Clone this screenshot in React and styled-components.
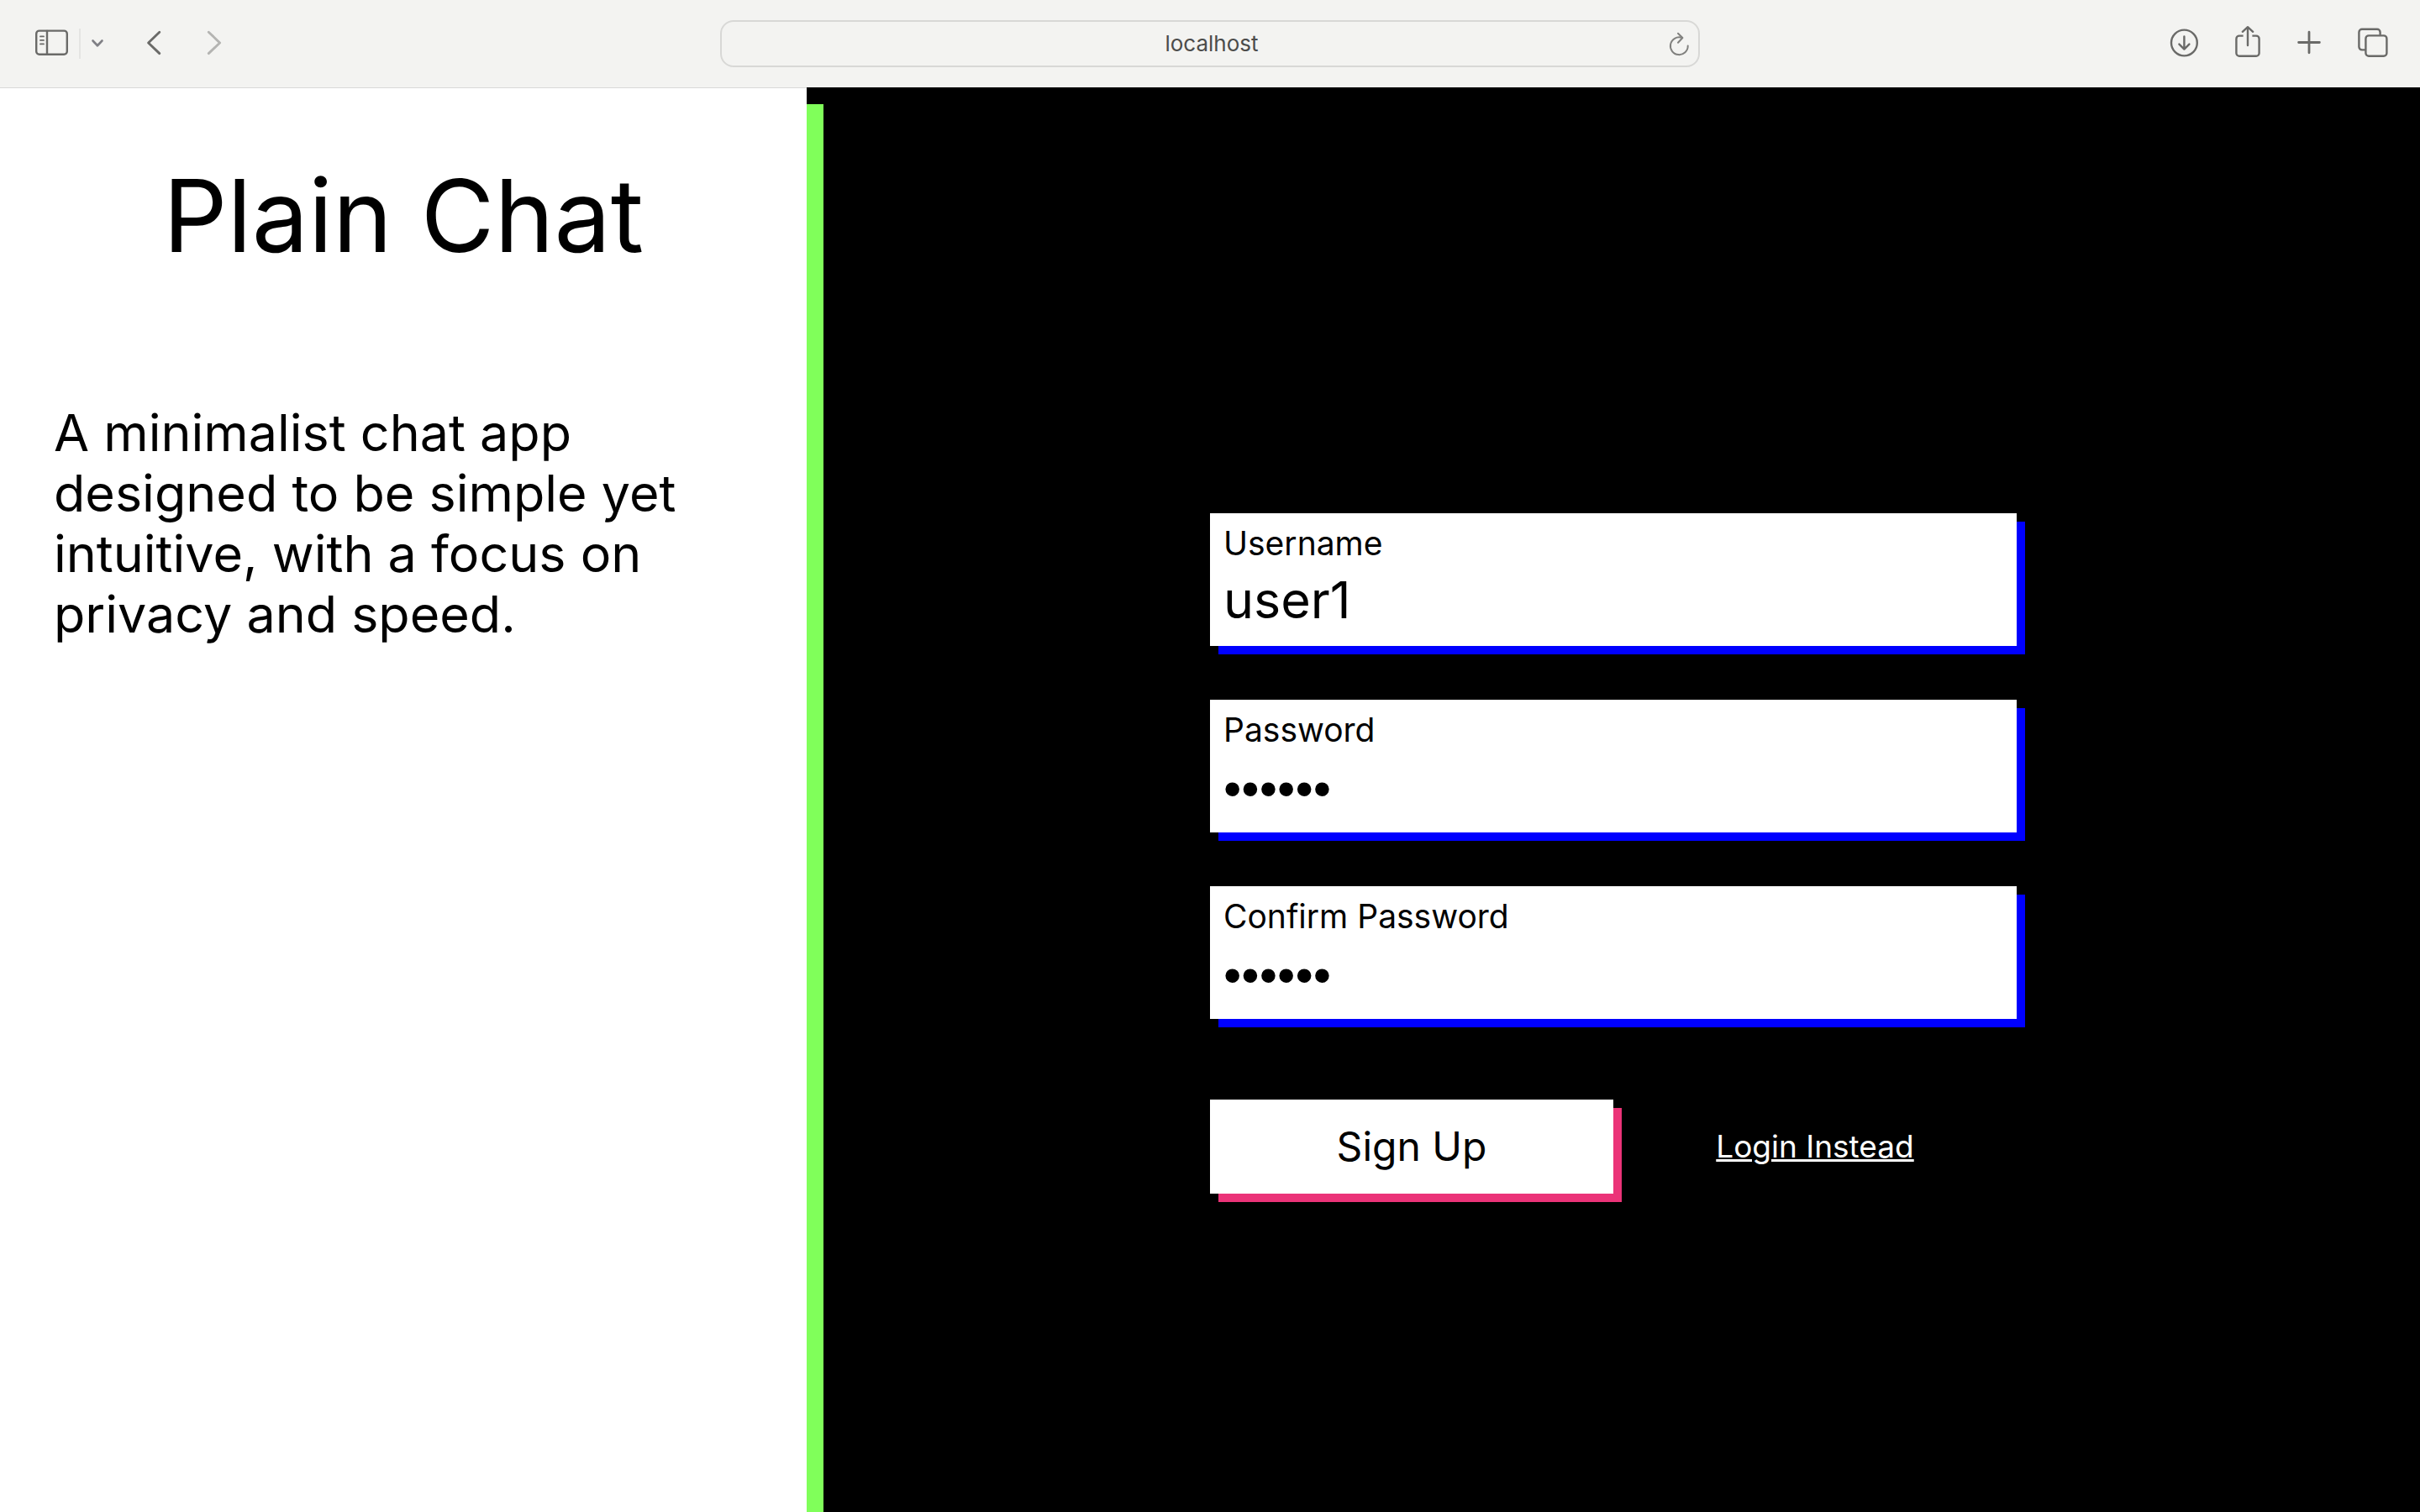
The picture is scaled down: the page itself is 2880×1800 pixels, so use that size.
import React from 'react';
import styled, { createGlobalStyle } from 'styled-components';

const GlobalStyle = createGlobalStyle`
  *, *::before, *::after { box-sizing: border-box; }
  body {
    margin: 0;
    background: #fff;
    color: #000;
    font-family: Inter, "Liberation Sans", sans-serif;
  }
`;

const Window = styled.div`
  display: flex;
  flex-direction: column;
  min-height: 100vh;
`;

const Toolbar = styled.header`
  display: grid;
  grid-template-columns: 1fr minmax(0, 1166px) 1fr;
  align-items: center;
  padding: 24px 38px;
  background: #f3f3f1;
`;

const ToolGroup = styled.div`
  display: flex;
  align-items: center;
  gap: ${(p) => p.$gap}px;
  justify-content: ${(p) => (p.$end ? 'flex-end' : 'flex-start')};
`;

const IconButton = styled.button`
  display: block;
  padding: 0;
  border: 0;
  background: none;
  color: ${(p) => p.$color || '#6a6a68'};

  svg {
    display: block;
    fill: none;
    stroke: currentColor;
    stroke-linecap: round;
    stroke-linejoin: round;
  }
`;

const Divider = styled.span`
  width: 2px;
  height: 36px;
  background: #e4e4e2;
`;

const AddressBar = styled.div`
  display: grid;
  grid-template-columns: 40px 1fr 36px;
  align-items: center;
  height: 56px;
  border: 2px solid #d8d8d6;
  border-radius: 16px;
`;

const AddressInput = styled.input`
  grid-column: 2;
  min-width: 0;
  padding: 0;
  border: 0;
  outline: 0;
  background: none;
  color: #4c4c4b;
  font: 400 26px/36px Inter, "Liberation Sans", sans-serif;
  text-align: center;
`;

const Page = styled.div`
  flex: 1;
  display: grid;
  grid-template-columns: 1fr 2fr;
`;

const Intro = styled.aside`
  position: relative;
  z-index: 1;
  padding: 80px 64px;
  border-top: 1px solid #d8d8d8;
  background: #fff;
  box-shadow: 20px 20px 0 #80ff5a;
`;

const Title = styled.h1`
  margin: 0 0 150px;
  font-size: 120px;
  font-weight: 400;
  line-height: 144px;
  text-align: center;
`;

const Tagline = styled.p`
  margin: 0;
  font-size: 61px;
  line-height: 72px;
`;

const Main = styled.main`
  display: flex;
  justify-content: center;
  align-items: center;
  padding-top: 128px;
  background: #000;
`;

const Form = styled.form`
  display: flex;
  flex-direction: column;
  gap: 64px;
  width: 50%;
`;

const FieldBox = styled.div`
  display: flex;
  flex-direction: column;
  padding: 12px 16px;
  background: #fff;
  box-shadow: 10px 10px 0 #00f;
`;

const FieldLabel = styled.label`
  font-size: 39px;
  line-height: 48px;
`;

const FieldInput = styled.input`
  width: 100%;
  height: 86px;
  padding: 0;
  border: 0;
  outline: 0;
  background: none;
  color: #000;
  font-family: Inter, "Liberation Sans", sans-serif;
  font-size: 61px;

  &[type='password'] {
    padding-top: 6px;
    font-family: "Liberation Sans", sans-serif;
  }
`;

const Actions = styled.div`
  display: grid;
  grid-template-columns: 1fr 1fr;
  align-items: center;
  margin-top: 32px;
`;

const SubmitButton = styled.button`
  height: 112px;
  padding: 0;
  border: 0;
  background: #fff;
  color: #000;
  box-shadow: 10px 10px 0 #eb3378;
  font: 400 48px/60px Inter, "Liberation Sans", sans-serif;
`;

const SwitchLink = styled.a`
  justify-self: center;
  color: #fff;
  font-size: 37px;
  line-height: 48px;
  text-decoration: underline;
  text-decoration-thickness: 3px;
  text-underline-offset: 2px;
`;

function SidebarIcon() {
  return (
    <svg width="44" height="44" viewBox="-4 0 44 44" strokeWidth="2.4">
      <rect x="1.2" y="6.6" width="36.6" height="28.2" rx="3.6" />
      <path d="M14 7v27.6" />
      <path d="M6 13.4h4M6 17.9h4M6 22.4h4" strokeWidth="1.8" />
    </svg>
  );
}

function ChevronDownIcon() {
  return (
    <svg width="16" height="44" viewBox="0 0 16 44" strokeWidth="2.8">
      <path d="M2.6 18.6L8 24.2l5.4-5.6" />
    </svg>
  );
}

function BackIcon() {
  return (
    <svg width="22" height="44" viewBox="0 0 22 44" strokeWidth="2.9">
      <path d="M15.8 8.2L2.6 21l13.2 12.6" />
    </svg>
  );
}

function ForwardIcon() {
  return (
    <svg width="22" height="44" viewBox="0 0 22 44" strokeWidth="2.9">
      <path d="M2.3 8.2L15.6 21 2.3 33.6" />
    </svg>
  );
}

function ReloadIcon() {
  return (
    <svg width="28" height="44" viewBox="0 0 28 44" strokeWidth="2">
      <path d="M16.4 14.8a10.4 10.4 0 1 0 7.3 9.6" />
      <path d="M12 9.8l5.4 5.2-5.4 5.8" />
    </svg>
  );
}

function DownloadIcon() {
  return (
    <svg width="34" height="44" viewBox="0 0 34 44" strokeWidth="2.4">
      <circle cx="17.4" cy="21" r="15.4" />
      <path d="M17.4 13.4v15M11.4 22.6l6 6 6-6" />
    </svg>
  );
}

function ShareIcon() {
  return (
    <svg width="30" height="44" viewBox="0 0 30 44" strokeWidth="2.4">
      <path d="M9.6 12.6H5a3.6 3.6 0 0 0-3.6 3.6v17a3.6 3.6 0 0 0 3.6 3.6h20a3.6 3.6 0 0 0 3.6-3.6v-17a3.6 3.6 0 0 0-3.6-3.6h-4.6" strokeLinecap="butt" />
      <path d="M15 24V2.4M8.8 7.8L15 2.2l6.2 5.6" />
    </svg>
  );
}

function PlusIcon() {
  return (
    <svg width="28" height="44" viewBox="0 0 28 44" strokeWidth="2.8">
      <path d="M14 8.2v24.6M1.6 20.5h24.8" />
    </svg>
  );
}

function TabsIcon() {
  return (
    <svg width="36" height="44" viewBox="0 0 36 44" strokeWidth="2.4">
      <rect x="9.4" y="12.4" width="25" height="24.4" rx="3.6" />
      <path d="M9 29.4H5a3.6 3.6 0 0 1-3.6-3.6V8.4A3.6 3.6 0 0 1 5 4.8h18a3.6 3.6 0 0 1 3.6 3.6v3.4" strokeLinecap="butt" />
    </svg>
  );
}

function Field({ id, label, type, value }) {
  return (
    <FieldBox>
      <FieldLabel htmlFor={id}>{label}</FieldLabel>
      <FieldInput id={id} type={type} defaultValue={value} />
    </FieldBox>
  );
}

export default function App() {
  return (
    <Window>
      <GlobalStyle />
      <Toolbar>
        <ToolGroup $gap={50}>
          <ToolGroup $gap={12}>
            <IconButton aria-label="Show sidebar"><SidebarIcon /></IconButton>
            <Divider />
            <IconButton aria-label="Tab groups" $color="#7f7f85"><ChevronDownIcon /></IconButton>
          </ToolGroup>
          <IconButton aria-label="Back"><BackIcon /></IconButton>
          <IconButton aria-label="Forward" $color="#b4b4b2"><ForwardIcon /></IconButton>
        </ToolGroup>
        <AddressBar>
          <AddressInput aria-label="Address" defaultValue="localhost" />
          <IconButton aria-label="Reload" $color="#80807e"><ReloadIcon /></IconButton>
        </AddressBar>
        <ToolGroup $gap={44} $end>
          <IconButton aria-label="Downloads"><DownloadIcon /></IconButton>
          <IconButton aria-label="Share"><ShareIcon /></IconButton>
          <IconButton aria-label="New tab"><PlusIcon /></IconButton>
          <IconButton aria-label="Tab overview"><TabsIcon /></IconButton>
        </ToolGroup>
      </Toolbar>
      <Page>
        <Intro>
          <Title>Plain Chat</Title>
          <Tagline>
            A minimalist chat app designed to be simple yet intuitive, with a focus on privacy and speed.
          </Tagline>
        </Intro>
        <Main>
          <Form onSubmit={(event) => event.preventDefault()}>
            <Field id="username" label="Username" type="text" value="user1" />
            <Field id="password" label="Password" type="password" value="secret" />
            <Field id="confirm" label="Confirm Password" type="password" value="secret" />
            <Actions>
              <SubmitButton type="submit">Sign Up</SubmitButton>
              <SwitchLink href="#login">Login Instead</SwitchLink>
            </Actions>
          </Form>
        </Main>
      </Page>
    </Window>
  );
}
